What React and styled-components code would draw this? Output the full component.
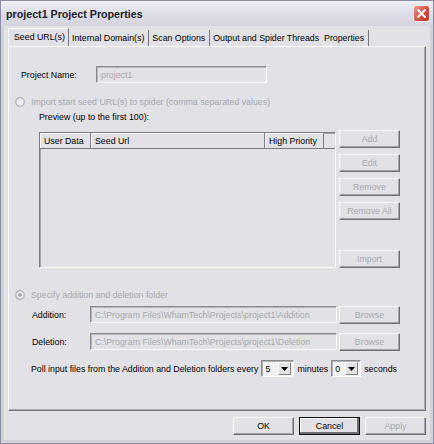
import React from 'react'
import styled, { createGlobalStyle } from 'styled-components'

const GlobalStyle = createGlobalStyle`
  html, body {
    margin: 0;
    padding: 0;
    background: #fff;
  }
  body {
    font-family: "Liberation Sans", Arial, sans-serif;
    font-size: 8.8px;
    color: #000;
  }
  * {
    box-sizing: border-box;
  }
`

const disabledText = '#a9a9ae'
const face = '#e1e1e6'

const Window = styled.div`
  width: 434px;
  height: 444px;
  display: flex;
  flex-direction: column;
  background: #d2d2dd;
  border: 1px solid #8d8da6;
  padding: 0 3px 3px;
`

const TitleBar = styled.div`
  height: 25px;
  margin: 0 -3px;
  padding: 0 3px 0 5px;
  display: flex;
  align-items: center;
  justify-content: space-between;
  background: linear-gradient(#eeeef4, #dcdce6 60%, #d4d4df);
`

const Title = styled.span`
  font-size: 10.7px;
  font-weight: bold;
  color: #222228;
`

const CloseButton = styled.div`
  width: 17px;
  height: 17px;
  border-radius: 3px;
  border: 1px solid #f4e8e8;
  background: linear-gradient(135deg, #ec9a8c, #d2503e 55%, #b83a2c);
  display: flex;
  align-items: center;
  justify-content: center;
`

const Body = styled.div`
  flex: 1;
  background: ${face};
  padding: 2px 4px 5px;
  display: flex;
  flex-direction: column;
`

const TabList = styled.div`
  display: flex;
  align-items: flex-end;
  height: 18px;
`

const Tab = styled.div`
  height: ${({ active }) => (active ? '18px' : '16px')};
  padding: 0 4px 0 ${({ active }) => (active ? '5px' : '3px')};
  display: flex;
  align-items: center;
  white-space: nowrap;
  border-right: 1px solid #77777c;
  ${({ active }) => active && `
    border-left: 1px solid #fff;
    border-top: 1px solid #fff;
    padding-bottom: 2px;
    width: 61px;
  `}
`

const Panel = styled.div`
  height: 365px;
  border: 1px solid;
  border-color: #fff #77777b #77777b #fff;
  box-shadow: inset -1px -1px 0 #a8a8ac;
  padding-left: 6px;
  display: flex;
  flex-direction: column;
`

const Row = styled.div`
  display: flex;
  align-items: center;
  height: ${({ h }) => h || 17}px;
  margin-top: ${({ top }) => top || 0}px;
  margin-left: ${({ left }) => left || 0}px;
  gap: ${({ gap }) => gap || 0}px;
`

const Label = styled.span`
  width: ${({ w }) => w}px;
  flex-shrink: 0;
  color: ${({ disabled }) => (disabled ? disabledText : '#000')};
  white-space: nowrap;
`

const TextBox = styled.div`
  width: ${({ w }) => w}px;
  height: 17px;
  border: 1px solid;
  border-color: #8a8a8e #fff #fff #8a8a8e;
  box-shadow: inset 1px 1px 0 #b8b8bc;
  padding: 0 4px;
  display: flex;
  align-items: center;
  color: ${disabledText};
  white-space: nowrap;
  overflow: hidden;
`

const RadioText = styled.span`
  margin-left: 6px;
  color: ${disabledText};
  white-space: nowrap;
`

const ListSection = styled.div`
  display: flex;
  height: 138px;
  margin-top: 7px;
  margin-left: 24px;
  gap: 3px;
`

const ListView = styled.div`
  width: 297px;
  height: 136px;
  margin-top: 2px;
  border: 1px solid;
  border-color: #7c7c80 #fff #fff #7c7c80;
  box-shadow: inset 1px 1px 0 #a8a8ac;
`

const Header = styled.div`
  display: flex;
  height: 16px;
  border-bottom: 1px solid #7c7c80;
`

const HeaderCell = styled.div`
  width: ${({ w }) => w}px;
  flex-shrink: 0;
  padding-left: 4px;
  display: flex;
  align-items: center;
  border-right: 1px solid #7c7c80;
  box-shadow: inset 1px 1px 0 #fff;
  white-space: nowrap;
`

const ButtonColumn = styled.div`
  display: flex;
  flex-direction: column;
  gap: 6px;
`

const Button = styled.div`
  width: 61px;
  height: 18px;
  flex-shrink: 0;
  margin-top: ${({ pushed }) => (pushed ? 'auto' : '0')};
  display: flex;
  align-items: center;
  justify-content: center;
  border: 1px solid;
  border-color: #fff #6e6e72 #6e6e72 #fff;
  box-shadow: inset -1px -1px 0 #a4a4a8;
  color: ${({ disabled }) => (disabled ? disabledText : '#000')};
  white-space: nowrap;
  ${({ primary }) => primary && `
    outline: 1px solid #111;
    outline-offset: -1px;
    box-shadow: inset -2px -2px 0 #6e6e72, inset 1px 1px 0 #fff;
  `}
`

const Combo = styled.div`
  width: ${({ w }) => w}px;
  height: 17px;
  border: 1px solid;
  border-color: #8a8a8e #fff #fff #8a8a8e;
  box-shadow: inset 1px 1px 0 #b0b0b4;
  background: #f2f2f4;
  display: flex;
  align-items: center;
  justify-content: space-between;
  padding: 2px 2px 2px 3px;
`

const ComboArrow = styled.div`
  width: 13px;
  height: 13px;
  background: ${face};
  border: 1px solid;
  border-color: #fff #808084 #808084 #fff;
  display: flex;
  align-items: center;
  justify-content: center;
`

const Footer = styled.div`
  display: flex;
  justify-content: flex-end;
  gap: 5px;
  margin-top: 6px;
`

const Radio = ({ checked }) => (
  <svg width="10" height="10" viewBox="0 0 10 10">
    <circle cx="5" cy="5" r="4.3" fill="#ececf0" stroke="#aeaeb4" strokeWidth="1.2" />
    {checked && <circle cx="5" cy="5" r="1.8" fill="#9a9aa0" />}
  </svg>
)

const Arrow = () => (
  <svg width="7" height="4" viewBox="0 0 7 4">
    <path d="M0 0h7L3.5 4z" fill="#000" />
  </svg>
)

const DropDown = ({ value, w }) => (
  <Combo w={w}>
    <span>{value}</span>
    <ComboArrow><Arrow /></ComboArrow>
  </Combo>
)

const tabs = ['Seed URL(s)', 'Internal Domain(s)', 'Scan Options', 'Output and Spider Threads  Properties']

export default function App() {
  return (
    <Window>
      <GlobalStyle />
      <TitleBar>
        <Title>project1 Project Properties</Title>
        <CloseButton>
          <svg width="11" height="11" viewBox="0 0 11 11">
            <path d="M2 2l7 7M9 2l-7 7" stroke="#fff" strokeWidth="2" strokeLinecap="round" />
          </svg>
        </CloseButton>
      </TitleBar>
      <Body>
        <TabList>
          {tabs.map((t, i) => (
            <Tab key={t} active={i === 0}>{t.replace('  ', '\u00a0 ')}</Tab>
          ))}
        </TabList>
        <Panel>
          <Row top={19} left={6}>
            <Label w={75}>Project Name:</Label>
            <TextBox w={171}>project1</TextBox>
          </Row>
          <Row top={13} h={12}>
            <Radio />
            <RadioText>Import start seed URL(s) to spider (comma separated values)</RadioText>
          </Row>
          <Row top={3} h={12} left={24}>
            <Label>Preview (up to the first 100):</Label>
          </Row>
          <ListSection>
            <ListView>
              <Header>
                <HeaderCell w={51}>User Data</HeaderCell>
                <HeaderCell w={174}>Seed Url</HeaderCell>
                <HeaderCell w={59}>High Priority</HeaderCell>
              </Header>
            </ListView>
            <ButtonColumn>
              <Button disabled>Add</Button>
              <Button disabled>Edit</Button>
              <Button disabled>Remove</Button>
              <Button disabled>Remove All</Button>
              <Button disabled pushed>Import</Button>
            </ButtonColumn>
          </ListSection>
          <Row top={21} h={12}>
            <Radio checked />
            <RadioText>Specify addition and deletion folder</RadioText>
          </Row>
          <Row top={5} left={17} gap={0}>
            <Label w={58}>Addition:</Label>
            <TextBox w={247}>C:\Program Files\WhamTech\Projects\project1\Addition</TextBox>
            <Button disabled style={{ marginLeft: 2 }}>Browse</Button>
          </Row>
          <Row top={10} left={17}>
            <Label w={58}>Deletion:</Label>
            <TextBox w={247}>C:\Program Files\WhamTech\Projects\project1\Deletion</TextBox>
            <Button disabled style={{ marginLeft: 2 }}>Browse</Button>
          </Row>
          <Row top={10} left={16} gap={3}>
            <Label>Poll input files from the Addition and Deletion folders every</Label>
            <DropDown value="5" w={33} />
            <Label>minutes</Label>
            <DropDown value="0" w={30} />
            <Label>seconds</Label>
          </Row>
        </Panel>
        <Footer>
          <Button>OK</Button>
          <Button primary>Cancel</Button>
          <Button disabled>Apply</Button>
        </Footer>
      </Body>
    </Window>
  )
}
